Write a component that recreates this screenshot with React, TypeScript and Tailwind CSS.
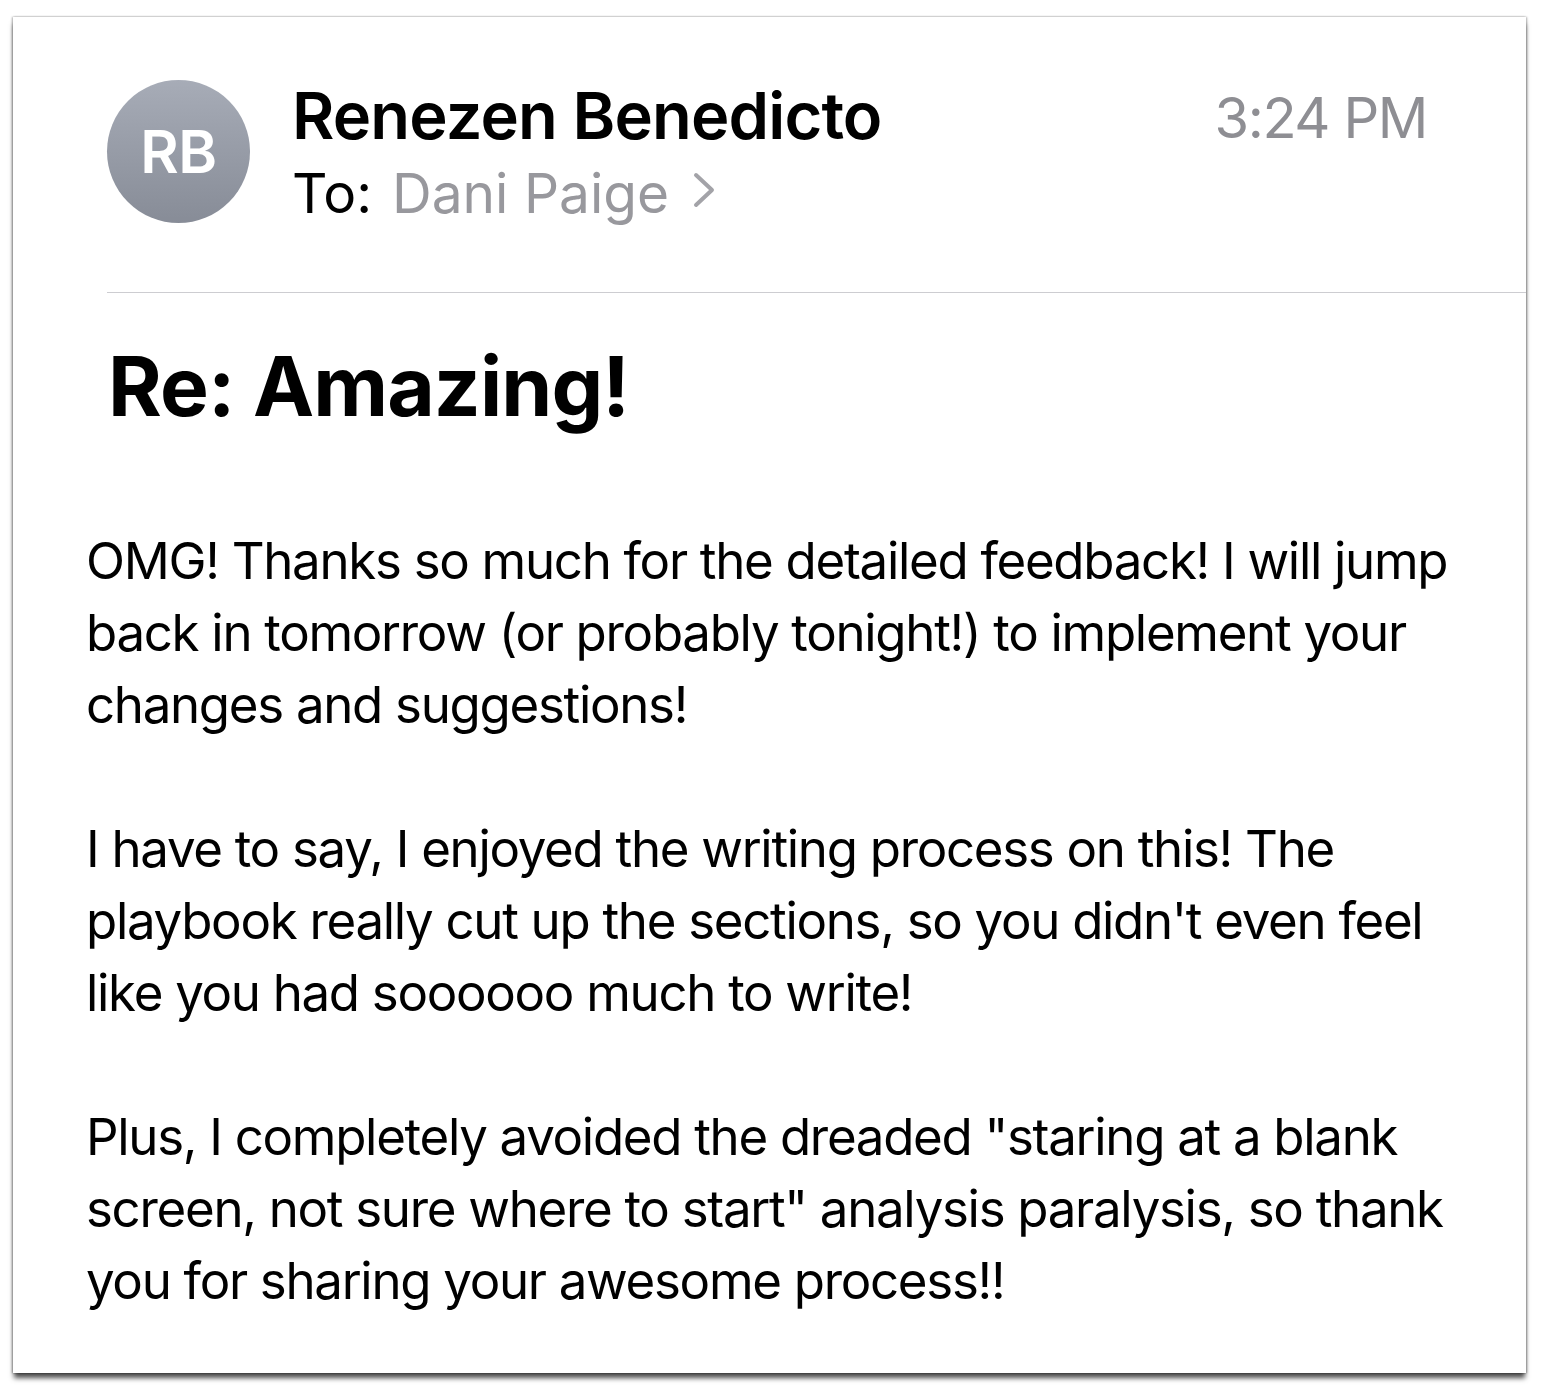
const body: string[][] = [
  [
    'OMG! Thanks so much for the detailed feedback! I will jump',
    'back in tomorrow (or probably tonight!) to implement your',
    'changes and suggestions!',
  ],
  [
    'I have to say, I enjoyed the writing process on this! The',
    "playbook really cut up the sections, so you didn't even feel",
    'like you had soooooo much to write!',
  ],
  [
    'Plus, I completely avoided the dreaded "staring at a blank',
    'screen, not sure where to start" analysis paralysis, so thank',
    'you for sharing your awesome process!!',
  ],
]

function Chevron() {
  return (
    <svg width="26" height="36" viewBox="0 0 26 36" className="ml-[22px] mt-[6px]">
      <polyline points="5,3 21,18 5,33" fill="none" stroke="#a3a3a8" strokeWidth="4" strokeLinecap="round" strokeLinejoin="round" />
    </svg>
  )
}

export default function App() {
  return (
    <div className="min-h-[1396px] bg-white pl-[13px] pt-[17px] font-['Inter',sans-serif]">
      <div className="h-[1356px] w-[1513px] bg-white shadow-[0_6px_5px_-1px_rgba(0,0,0,0.7),1px_0_2px_rgba(0,0,0,0.3),-1px_0_2px_rgba(0,0,0,0.3)]">
        <div className="flex pl-[94px] pr-[99px] pt-[63px]">
          <div className="flex h-[143px] w-[143px] shrink-0 items-center justify-center rounded-full bg-gradient-to-b from-[#a7acb7] to-[#878c97]">
            <span className="text-[59px] font-semibold leading-none tracking-[-0.5px] text-white">RB</span>
          </div>
          <div className="ml-[42px] flex flex-1 flex-col">
            <div className="mt-[3px] text-[65px] font-semibold leading-none tracking-[-0.85px] text-black">
              Renezen Benedicto
            </div>
            <div className="mt-[18px] flex items-start text-[55px] leading-none">
              <span className="text-black">To:</span>
              <span className="ml-[20px] text-[#98989d]">Dani Paige</span>
              <Chevron />
            </div>
          </div>
          <div className="mt-[10px] text-[56px] leading-none tracking-[-1.4px] text-[#8e8e93]">3:24 PM</div>
        </div>
        <div className="ml-[94px] mt-[69px] h-px bg-[#cdcdd1]" />
        <h1 className="ml-[95px] mt-[53px] text-[82px] font-bold leading-none tracking-[-0.9px] text-black">
          Re: Amazing!
        </h1>
        <div className="ml-[73px] mt-[97px] text-[51px] leading-[72px] tracking-[-1.3px] text-black">
          {body.map((para, i) => (
            <div key={i} className={i > 0 ? 'mt-[72px]' : ''}>
              {para.map((line) => (
                <div key={line} className="whitespace-nowrap">
                  {line}
                </div>
              ))}
            </div>
          ))}
        </div>
      </div>
    </div>
  )
}
